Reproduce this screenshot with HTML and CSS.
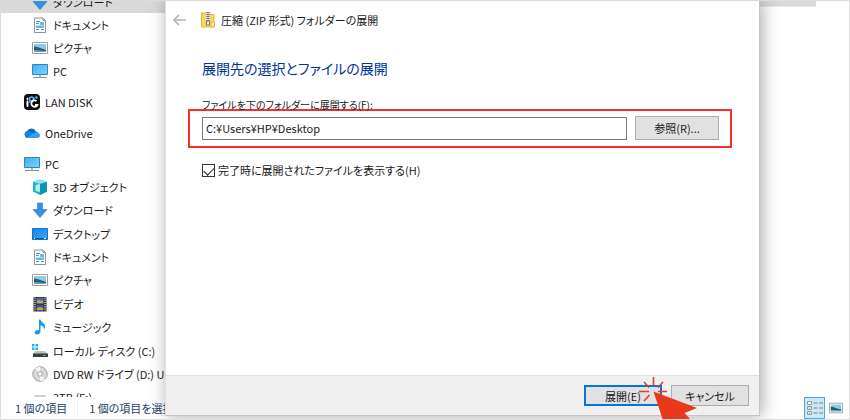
FILE: index.html
```html
<!DOCTYPE html>
<html lang="ja">

<head>
    <meta charset="UTF-8">
    <meta name="viewport" content="width=device-width, initial-scale=1.0">
    <title>圧縮 (ZIP 形式) フォルダーの展開</title>
    <link rel="stylesheet" href="styles.css">
</head>

<body>
    <!-- Shared icons -->
    <svg class="defs" width="0" height="0">
        <defs>
            <linearGradient id="blue" x1="0" y1="0" x2="1" y2="1">
                <stop offset="0" stop-color="#39b1f2" />
                <stop offset="1" stop-color="#7cd3fb" />
            </linearGradient>
            <linearGradient id="desk" x1="0" y1="0" x2="1" y2="1">
                <stop offset="0" stop-color="#1583df" />
                <stop offset="1" stop-color="#35adfa" />
            </linearGradient>
            <symbol id="i-down" viewBox="0 0 16 16">
                <path d="M5.500 1h5v6.500h4.500L8 15.500 1 7.500h4.500z" fill="#3590df" stroke="#2479c6" stroke-width=".6" />
            </symbol>
            <symbol id="i-doc" viewBox="0 0 16 16">
                <path d="M2.500 1h8.500l2.500 2.500v12h-11z" fill="#fff" stroke="#8c9093" />
                <path d="M11 1v2.500h2.500" fill="none" stroke="#8c9093" />
                <path d="M4 4.500h4M4 6.500h3M4 12.500h3M9 12.500h3" stroke="#3f92d0" />
                <path d="M8 5h4v3H8zM4 8.500h8V11H4z" fill="#6db6e2" />
            </symbol>
            <symbol id="i-pic" viewBox="0 0 16 16">
                <path d="M.5 2.500h15v11H.5z" fill="#fff" stroke="#9a9fa3" />
                <path d="M2 4h12v5H2z" fill="#8fc9ef" />
                <path d="M2 6.500c4 0 7 2.500 12 3V11H2z" fill="#315d68" />
                <path d="M2 10l12 1v1H2z" fill="#5fa9cf" />
            </symbol>
            <symbol id="i-pc" viewBox="0 0 16 16">
                <path d="M.5 1.500h15v10H.5z" fill="url(#blue)" stroke="#3884b3" />
                <path d="M7 12h2v2H7z" fill="#b0bec8" />
                <path d="M1 14.500h14" stroke="#7897ad" />
            </symbol>
            <symbol id="i-lan" viewBox="0 0 16 16">
                <rect width="16" height="16" rx="4" fill="#090b0e" />
                <path d="M3.500 7.500V12M3.500 4.500v.5" stroke="#fff" stroke-width="2" stroke-linecap="round" />
                <circle cx="7.500" cy="5" r="2" fill="none" stroke="#5eb1f1" stroke-width="1.500" />
                <path d="M9 5.500l3-2.500M6 7l-1 2" stroke="#5eb1f1" />
                <path d="M12.500 7a3.200 3.200 0 1 0 1 3.800h-2.500" fill="none" stroke="#fff" stroke-width="1.800" />
                <circle cx="12.500" cy="3.500" r="1.200" fill="#5eb1f1" />
            </symbol>
            <symbol id="i-cloud" viewBox="0 0 16 16">
                <path d="M3.500 13A3.500 3.500 0 0 1 3 6.200 5 5 0 0 1 12 6.500a3.500 3.500 0 0 1 1 6.500z" fill="#0b68bd" />
                <path d="M3 6.500a5 5 0 0 1 4 .5l5 4-7 2H3.500A3.400 3.400 0 0 1 3 6.500z" fill="#1684d6" />
                <path d="M3 13l6-4.500c5-3 7 .5 7 2 0 1.500-1 2.500-3 2.500z" fill="#2aa4ee" />
            </symbol>
            <symbol id="i-cube" viewBox="0 0 16 16">
                <path d="M1 3l7-2.500L15 3v9.500L8 16l-7-3.500z" fill="#20b3ca" />
                <path d="M1 3l7-2.500L15 3 8 5z" fill="#86e4ec" />
                <path d="M8 5l7-2v9.500L8 16z" fill="#0b94b3" />
                <path d="M3.500 6L8 5v8l-4.500-1z" fill="#b4f0e9" />
            </symbol>
            <symbol id="i-desk" viewBox="0 0 16 16">
                <path d="M.5 2.500h15v11H.5z" fill="url(#desk)" stroke="#1673bd" />
                <path d="M1 12.500h14" stroke="#0a5595" />
                <path d="M2 12.500h1M12 12.500h2" stroke="#fff" />
            </symbol>
            <symbol id="i-video" viewBox="0 0 16 16">
                <path d="M1.500 1h13v14.500h-13z" fill="#38373a" />
                <path d="M4.500 2h7v6h-7z" fill="#3d6fbb" />
                <path d="M4.500 9h7v6h-7z" fill="#2d58a0" />
                <path d="M5 5l2-1 2 1 2-1v3H5zM5 12l3-1 3 1v2H5z" fill="#d6a72d" />
                <path d="M3 1.500V15M13 1.500V15" stroke="#eee" stroke-width="1.200" stroke-dasharray="1 1.200" />
            </symbol>
            <symbol id="i-music" viewBox="0 0 16 16">
                <path d="M7 .5h1.500c.5 3 4.500 3.500 4.500 7 0 1.500-.5 2.500-1 3 .2-3-1.500-4-3.500-4.300V12c0 2-1.500 3.500-3.500 3.500-3.500 0-3.500-5 2-4.500z" fill="#169ae8" />
            </symbol>
            <symbol id="i-disk" viewBox="0 0 16 16">
                <path d="M0 1h2.500v2.500H0zM3.500 1H6v2.500H3.500zM0 4.500h2.500V7H0zM3.500 4.500H6V7H3.500z" fill="#19b5ed" />
                <path d="M3 8h10l2.500 3H1z" fill="#bfc3c5" />
                <path d="M1 10.500h15V14H1z" fill="#393d3f" />
                <path d="M11 12.500h2.500" stroke="#45df63" />
            </symbol>
            <symbol id="i-disc" viewBox="0 0 16 16">
                <circle cx="8" cy="8" r="7.300" fill="#d6d8d9" stroke="#a4a7a9" />
                <path d="M8 8L3 2.500A7 7 0 0 1 8 1zM8 8l5 5.500A7 7 0 0 1 8 15z" fill="#f5f5f5" />
                <circle cx="8" cy="8" r="2.200" fill="#fff" stroke="#9b9ea0" />
            </symbol>
            <symbol id="i-drive" viewBox="0 0 16 16">
                <path d="M3 6h10l2.500 3H.5z" fill="#ced0d2" />
                <path d="M.5 9h15v4H.5z" fill="#4b4f52" />
            </symbol>
        </defs>
    </svg>

    <div class="window">
        <div class="explorer">
            <nav class="sidebar">
                <ul class="group quick">
                    <li class="selected"><a href="#"><svg class="icon"><use href="#i-down" /></svg>ダウンロード</a></li>
                    <li><a href="#"><svg class="icon"><use href="#i-doc" /></svg>ドキュメント</a></li>
                    <li><a href="#"><svg class="icon"><use href="#i-pic" /></svg>ピクチャ</a></li>
                    <li><a href="#"><svg class="icon"><use href="#i-pc" /></svg>PC</a></li>
                </ul>
                <ul class="group">
                    <li class="root"><a href="#"><svg class="icon"><use href="#i-lan" /></svg>LAN DISK</a></li>
                </ul>
                <ul class="group">
                    <li class="root"><a href="#"><svg class="icon"><use href="#i-cloud" /></svg>OneDrive</a></li>
                </ul>
                <ul class="group devices">
                    <li class="root"><a href="#"><svg class="icon"><use href="#i-pc" /></svg>PC</a></li>
                    <li><a href="#"><svg class="icon"><use href="#i-cube" /></svg>3D オブジェクト</a></li>
                    <li><a href="#"><svg class="icon"><use href="#i-down" /></svg>ダウンロード</a></li>
                    <li><a href="#"><svg class="icon"><use href="#i-desk" /></svg>デスクトップ</a></li>
                    <li><a href="#"><svg class="icon"><use href="#i-doc" /></svg>ドキュメント</a></li>
                    <li><a href="#"><svg class="icon"><use href="#i-pic" /></svg>ピクチャ</a></li>
                    <li><a href="#"><svg class="icon"><use href="#i-video" /></svg>ビデオ</a></li>
                    <li><a href="#"><svg class="icon"><use href="#i-music" /></svg>ミュージック</a></li>
                    <li><a href="#"><svg class="icon"><use href="#i-disk" /></svg>ローカル ディスク (C:)</a></li>
                    <li><a href="#"><svg class="icon"><use href="#i-disc" /></svg>DVD RW ドライブ (D:) UI</a></li>
                    <li><a href="#"><svg class="icon"><use href="#i-drive" /></svg>3TB (F:)</a></li>
                </ul>
            </nav>
            <div class="files">
                <div class="file-row"></div>
            </div>
        </div>

        <footer class="statusbar">
            <span class="count">1 個の項目</span>
            <span class="count">1 個の項目を選択</span>
            <div class="views">
                <button class="view active" type="button" aria-label="詳細">
                    <svg width="16" height="16" viewBox="0 0 16 16">
                        <path d="M.5 1.500h4v3h-4zM.5 6.500h4v3h-4zM.5 11.500h4v3h-4z" fill="#fff" stroke="#8d9ba4" />
                        <path d="M1.500 8h2M1.500 13h2" stroke="#dc7b73" />
                        <path d="M6.500 3h4M12 3h4M6.500 8h4M12 8h4M6.500 13h4M12 13h4" stroke="#75838c" />
                    </svg>
                </button>
                <button class="view" type="button" aria-label="大アイコン">
                    <svg width="14" height="14" viewBox="0 0 16 16"><use href="#i-pic" /></svg>
                </button>
            </div>
        </footer>

        <form class="dialog">
            <header class="titlebar">
                <button class="back" type="button" aria-label="戻る">
                    <svg width="13" height="12" viewBox="0 0 13 12">
                        <path d="M6 1L1 6l5 5M1 6h12" fill="none" stroke="#b5b5b5" stroke-width="1.600" />
                    </svg>
                </button>
                <svg class="zip" width="14" height="16" viewBox="0 0 14 16">
                    <path d="M.5 1h8l1 1.500h3.500V15H.5z" fill="#f8d568" stroke="#e5b940" />
                    <path d="M10 10h3.500v5H10z" fill="#ffe999" stroke="#e5b940" />
                    <path d="M5 0h4v13H5z" fill="#dcdcd5" />
                    <path d="M7 0v9" stroke="#74736c" stroke-width="3" stroke-dasharray="1 1" />
                    <path d="M5.500 9h3v4h-3z" fill="#f6f6f6" stroke="#777" />
                </svg>
                <span>圧縮 (ZIP 形式) フォルダーの展開</span>
            </header>
            <div class="content">
                <h1>展開先の選択とファイルの展開</h1>
                <label class="caption" for="path">ファイルを下のフォルダーに展開する(F):</label>
                <div class="path-row">
                    <input type="text" id="path" value="C:¥Users¥HP¥Desktop">
                    <button class="browse" type="button">参照(R)...</button>
                </div>
                <div class="check-row">
                    <input type="checkbox" id="show" checked>
                    <label for="show">完了時に展開されたファイルを表示する(H)</label>
                </div>
            </div>
            <div class="actions">
                <button class="primary" type="button">展開(E)</button>
                <button type="button">キャンセル</button>
            </div>
        </form>

        <!-- Click pointer over the extract button -->
        <svg class="pointer" width="64" height="42" viewBox="0 0 64 42">
            <path d="M17.500 14.500L61 31l-12.500 5L54 42H26.500z" fill="#e8391b" />
            <path d="M17.500 0v9M8 5l5 5.500M27 5l-5 5.500M3 14.500h10M22 14.500h9M8 24l5.500-6" stroke="#e8391b" stroke-width="1.500" />
        </svg>
    </div>
</body>

</html>
```
FILE: styles.css
```css
* {
    box-sizing: border-box;
}

body {
    margin: 0;
    font-family: "Noto Sans CJK JP", sans-serif;
    font-size: 11px;
    line-height: 16px;
    font-feature-settings: "palt";
    color: #1a1a1a;
    background-color: #fff;
}

button,
input {
    font: inherit;
    font-feature-settings: inherit;
    color: inherit;
}

.defs {
    position: absolute;
}

.window {
    position: relative;
    display: flex;
    flex-direction: column;
    height: 100vh;
    border: 1px solid #dcdcdc;
    overflow: hidden;
}

.explorer {
    flex: 1;
    display: flex;
    min-height: 0;
}

/* Navigation pane */
.sidebar {
    width: 168px;
    display: flex;
    flex-direction: column;
    overflow: hidden;
}

.group {
    list-style: none;
    margin: 0 0 8px;
    padding: 0;
}

.quick {
    margin-top: -11px;
}

.group li {
    height: 23px;
    flex: 1 0 auto;
    padding-left: 31px;
}

.group li.root {
    padding-left: 23px;
}

.group li.selected {
    background-color: #d9d9d9;
}

.group a {
    display: flex;
    align-items: center;
    gap: 5px;
    height: 100%;
    color: inherit;
    text-decoration: none;
    white-space: nowrap;
}

.devices {
    flex: 1;
    display: flex;
    flex-direction: column;
    margin-bottom: -12px;
}

.icon {
    width: 16px;
    height: 16px;
    flex: none;
}

.files {
    flex: 1;
    padding-right: 33px;
}

.file-row {
    height: 6px;
    background-color: #d9d9d9;
    border-bottom: 1px solid #e6e6e6;
}

/* Status bar */
.statusbar {
    height: 22px;
    display: flex;
    align-items: center;
    padding-left: 14px;
    color: #24415f;
    background-color: #fff;
}

.count {
    white-space: nowrap;
}

.count + .count {
    margin-left: 10px;
    padding-left: 11px;
    border-left: 1px solid #ececec;
}

.views {
    display: flex;
    margin-left: auto;
    padding-right: 3px;
}

.view {
    display: flex;
    align-items: center;
    justify-content: center;
    width: 21px;
    height: 22px;
    padding: 0;
    border: 1px solid transparent;
    background: none;
}

.view.active {
    border-color: #45acdc;
    background-color: #cce8f7;
}

/* Extract dialog */
.dialog {
    position: absolute;
    top: 0;
    left: 164px;
    right: 89px;
    bottom: 3px;
    display: flex;
    flex-direction: column;
    background-color: #fff;
    border: 1px solid #c4c4c4;
    border-top: none;
    border-left-color: #e0e0e0;
    box-shadow: 2px 0 16px rgba(0, 0, 0, 0.35);
}

.titlebar {
    display: flex;
    align-items: center;
    height: 38px;
    padding-left: 7px;
}

.back {
    display: flex;
    padding: 0;
    border: none;
    background: none;
}

.zip {
    margin: 0 6px 0 15px;
}

.content {
    flex: 1;
    padding: 17px 27px 0 22px;
}

h1 {
    margin: 0 0 17px 14px;
    font-size: 14px;
    font-weight: 400;
    line-height: 24px;
    color: #003399;
}

.caption {
    display: block;
    height: 12px;
    margin-left: 14px;
    font-size: 10px;
}

.path-row {
    display: flex;
    align-items: center;
    gap: 8px;
    padding: 5px 11px 6px 12px;
    border: 2px solid #f92f2f;
}

.path-row input {
    flex: 1;
    min-width: 0;
    height: 23px;
    padding: 0 3px;
    border: 1px solid #7a7a7a;
    background-color: #fff;
}

.dialog button:not(.back) {
    padding: 0;
    border: 1px solid #adadad;
    background-color: #e1e1e1;
}

.browse {
    width: 84px;
    height: 24px;
}

.check-row {
    display: flex;
    align-items: center;
    gap: 3px;
    margin: 14px 0 0 14px;
}

.check-row input {
    appearance: none;
    width: 13px;
    height: 13px;
    margin: 0;
    border: 1px solid #333;
    background-color: #fff;
}

/* Tick mark */
.check-row input:checked::before {
    content: "";
    display: block;
    width: 9px;
    height: 5px;
    margin: 2px 1px;
    border-left: 1px solid #222;
    border-bottom: 1px solid #222;
    transform: rotate(-45deg);
}

.actions {
    display: flex;
    justify-content: flex-end;
    gap: 9px;
    padding: 9px 10px;
    border-top: 1px solid #dfdfdf;
    background-color: #f0f0f0;
}

.actions button {
    width: 78px;
    height: 21px;
}

.dialog .actions .primary {
    border: 2px solid #0078d7;
}

.pointer {
    position: absolute;
    right: 149px;
    bottom: 0;
}
```
